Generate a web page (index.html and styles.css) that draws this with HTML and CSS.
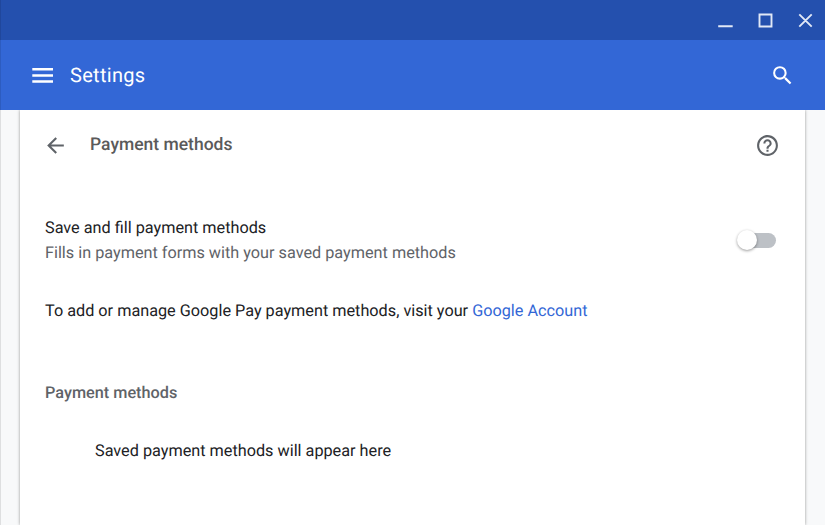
FILE: index.html
```html
<!DOCTYPE html>
<html lang="en">
<head>
<meta charset="utf-8">
<title>Settings</title>
<link rel="stylesheet" href="styles.css">
</head>
<body>
<div class="titlebar">
  <svg class="window-controls" width="96" height="16" viewBox="0 0 96 16" fill="none" stroke="#e1e8f6" stroke-width="1.900"><path d="M.2 14.300h14.500M41.500 2.500h12v12h-12zM81.300 2.300l12.400 12.400M93.700 2.300l-12.400 12.400"/></svg>
</div>
<header class="toolbar">
  <svg class="menu" width="22" height="16" viewBox="0 0 22 16" fill="#fff"><path d="M.3 1h20.700v2.500H.3zM.3 7.200h20.700v2.500H.3zM.3 13.300h20.700v2.500H.3z"/></svg>
  <h1 class="app-title">Settings</h1>
  <svg class="search" width="25" height="25" viewBox="0 0 24 24" fill="#fff"><path d="M15.500 14h-.79l-.28-.27A6.471 6.471 0 0 0 16 9.500 6.500 6.500 0 1 0 9.500 16c1.610 0 3.090-.59 4.230-1.570l.27.28v.79l5 4.990L20.490 19l-4.990-5zm-6 0C7.010 14 5 11.990 5 9.500S7.010 5 9.500 5 14 7.010 14 9.500 11.990 14 9.500 14z"/></svg>
</header>
<main class="card">
  <div class="page-head">
    <svg class="back" width="25" height="25" viewBox="0 0 24 24" fill="#5f6368"><path d="M20 11H7.830l5.590-5.590L12 4l-8 8 8 8 1.410-1.410L7.830 13H20v-2z"/></svg>
    <h2 class="page-title">Payment methods</h2>
    <svg class="help" width="25" height="25" viewBox="0 0 24 24" fill="#5f6368"><path d="M11 18h2v-2h-2v2zm1-16C6.480 2 2 6.480 2 12s4.480 10 10 10 10-4.480 10-10S17.520 2 12 2zm0 18c-4.410 0-8-3.590-8-8s3.590-8 8-8 8 3.590 8 8-3.590 8-8 8zm0-14c-2.210 0-4 1.790-4 4h2c0-1.100.9-2 2-2s2 .9 2 2c0 2-3 1.750-3 5h2c0-2.250 3-2.500 3-5 0-2.210-1.790-4-4-4z"/></svg>
  </div>
  <div class="setting">
    <div class="setting-text">
      <div class="label">Save and fill payment methods</div>
      <div class="hint">Fills in payment forms with your saved payment methods</div>
    </div>
    <div class="toggle"><span class="knob"></span></div>
  </div>
  <p class="manage">To add or manage Google Pay payment methods, visit your <a class="link">Google Account</a></p>
  <h3 class="section-title">Payment methods</h3>
  <p class="empty">Saved payment methods will appear here</p>
</main>
</body>
</html>
```

FILE: styles.css
```css
* { box-sizing: border-box; }
html { overflow: hidden; }
body {
  margin: 0;
  height: 525px;
  display: flex;
  flex-direction: column;
  overflow: hidden;
  background: #f8f9fa;
  color: #202124;
  font: 16.24px/25px Roboto, sans-serif;
  text-rendering: geometricPrecision;
}
/* window edge */
body::after {
  content: "";
  position: absolute;
  inset: 0 auto 0 0;
  width: 1px;
  background: rgba(0, 0, 0, .1);
}
h1, h2, h3, p { margin: 0; }
svg { display: block; flex: none; }
.titlebar {
  height: 40px;
  flex: none;
  display: flex;
  justify-content: flex-end;
  align-items: center;
  padding-right: 11px;
  background: #2450ae;
}
.toolbar {
  height: 70px;
  flex: none;
  display: flex;
  align-items: center;
  padding: 0 30px 0 32px;
  background: #3367d6;
  color: #fff;
}
.app-title { flex: 1; margin-left: 16px; font-size: 20px; font-weight: 400; letter-spacing: .3px; }
.card {
  flex: 1;
  margin: 0 20px;
  padding: 0 25px;
  background: #fff;
  box-shadow: 0 0 3px rgba(0, 0, 0, .4);
  clip-path: inset(0 -5px);
}
.page-head { height: 70px; display: flex; align-items: center; }
.back { margin-left: -2px; }
.page-title { flex: 1; margin-left: 22px; font-size: 17.5px; font-weight: 500; color: #5a5a5a; }
.setting { margin-top: 35px; display: flex; align-items: center; justify-content: space-between; }
.hint { color: #5f6368; }
.toggle { position: relative; width: 35px; height: 15px; margin-right: 4px; border-radius: 8px; background: #bdc1c6; }
.knob {
  position: absolute;
  left: -4px;
  top: -3px;
  width: 20px;
  height: 20px;
  border-radius: 50%;
  background: #fff;
  box-shadow: 0 1px 3px rgba(0, 0, 0, .4);
}
.manage { margin-top: 33px; }
.link { color: #3367d6; }
.section-title { margin-top: 57px; font-size: 16.25px; font-weight: 500; color: #5f6368; }
.empty { margin: 33px 0 0 50px; }
```
